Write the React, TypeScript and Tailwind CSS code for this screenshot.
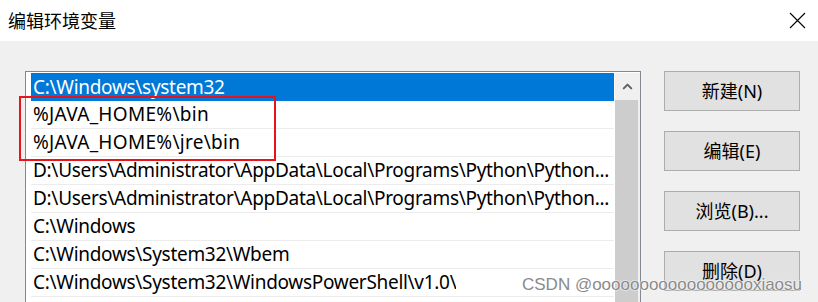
import { ChevronUp } from "lucide-react";

const rows = [
  { text: "C:\\Windows\\system32", wide: false },
  { text: "%JAVA_HOME%\\bin", wide: true },
  { text: "%JAVA_HOME%\\jre\\bin", wide: true },
  { text: "D:\\Users\\Administrator\\AppData\\Local\\Programs\\Python\\Python...", wide: false },
  { text: "D:\\Users\\Administrator\\AppData\\Local\\Programs\\Python\\Python...", wide: false },
  { text: "C:\\Windows", wide: false },
  { text: "C:\\Windows\\System32\\Wbem", wide: false },
  { text: "C:\\Windows\\System32\\WindowsPowerShell\\v1.0\\", wide: false },
  { text: "", wide: false },
];

const buttons = ["新建(N)", "编辑(E)", "浏览(B)...", "删除(D)"];

const font = "font-['Noto_Sans','Noto_Sans_CJK_SC',sans-serif]";

export default function App() {
  return (
    <div className={`relative h-[302px] w-[818px] overflow-hidden bg-[#f0f0f0] ${font}`}>
      {/* title bar */}
      <div className="flex h-[41px] items-center justify-between bg-white pl-[8px] pr-[12px]">
        <span className="text-[18px] leading-none text-black">编辑环境变量</span>
        <svg width="17" height="17" viewBox="0 0 17 17" className="text-black">
          <path d="M1 1 L16 16 M16 1 L1 16" stroke="currentColor" strokeWidth="1.1" />
        </svg>
      </div>

      <div className="flex pl-[25px] pt-[30px]">
        {/* list box */}
        <div className="relative flex h-[240px] w-[616px] border border-[#828790] bg-white pl-[5px] pt-[1px]">
          <div className="flex min-w-0 flex-1 flex-col">
            {rows.map((r, i) => (
              <div
                key={i}
                className={
                  i === 0
                    ? "flex h-[28px] shrink-0 items-center bg-[#0078d7] pl-[2px] text-[19px] text-white"
                    : "flex h-[28px] shrink-0 items-center border-b border-[#ececec] pl-[2px] text-[19px] text-black"
                }
              >
                <span
                  className={
                    r.wide
                      ? "overflow-hidden whitespace-nowrap tracking-[0.3px]"
                      : "overflow-hidden whitespace-nowrap tracking-[-0.3px]"
                  }
                >
                  {r.text}
                </span>
              </div>
            ))}
          </div>
          {/* scrollbar */}
          <div className="ml-[1px] flex w-[25px] flex-col bg-[#f0f0f0] pr-[2px]">
            <div className="flex h-[27px] items-center justify-center bg-[#f0f0f0] pl-[2px]">
              <ChevronUp size={15} strokeWidth={3.2} className="text-[#606060]" />
            </div>
            <div className="flex-1 bg-[#cdcdcd]" />
          </div>

          {/* highlight box */}
          <div className="pointer-events-none absolute left-[-7px] top-[24px] h-[65px] w-[257px] border-2 border-[#e8141b]" />
        </div>

        {/* buttons */}
        <div className="ml-[23px] flex flex-col gap-[20px]">
          {buttons.map((b) => (
            <div
              key={b}
              className="flex h-[40px] w-[136px] items-center justify-center border border-[#adadad] bg-[#e1e1e1] text-[18px] text-black"
            >
              {b}
            </div>
          ))}
        </div>
      </div>

      {/* watermark */}
      <div className="pointer-events-none absolute left-[522px] top-[273px] whitespace-nowrap font-['Liberation_Sans',sans-serif] text-[17px] leading-[24px] text-[#8a8a8a] [text-shadow:0_0_2px_#fff,0_0_2px_#fff]">
        CSDN @oooooooooooooooooxiaosu
      </div>
    </div>
  );
}
